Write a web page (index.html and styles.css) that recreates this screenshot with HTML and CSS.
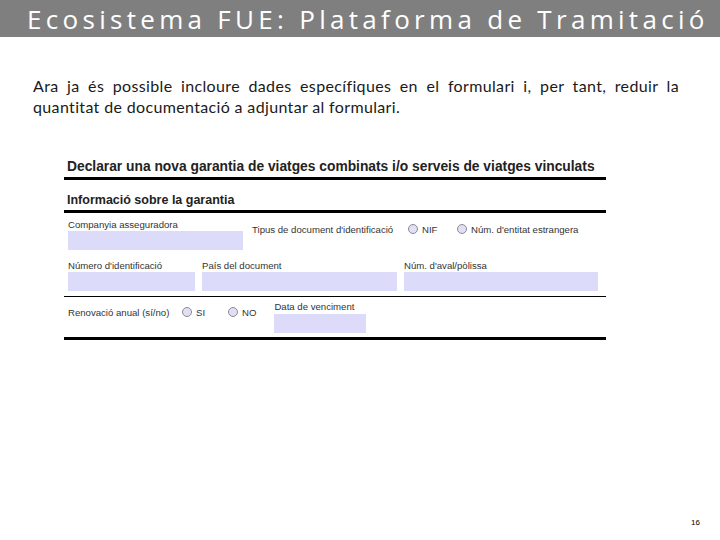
FILE: index.html
```html
<!DOCTYPE html>
<html>
<head>
<meta charset="utf-8">
<link rel="stylesheet" href="styles.css">
</head>
<body>
<header class="bar"><h1 class="title">Ecosistema FUE: Plataforma de Tramitació</h1></header>
<p class="intro">Ara ja és possible incloure dades específiques en el formulari i, per tant, reduir la quantitat de documentació a adjuntar al formulari.</p>
<section class="form">
  <h2 class="form-title">Declarar una nova garantia de viatges combinats i/o serveis de viatges vinculats</h2>
  <h3 class="sec-title">Informació sobre la garantia</h3>
  <div class="row row1">
    <div class="field f-comp">
      <span class="lbl">Companyia asseguradora</span>
      <span class="inp"></span>
    </div>
    <div class="choice c-tipus">
      <span class="lbl">Tipus de document d'identificació</span>
      <span class="opt opt-nif"><span class="radio"></span>NIF</span>
      <span class="opt"><span class="radio"></span>Núm. d'entitat estrangera</span>
    </div>
  </div>
  <div class="row row2">
    <div class="field f-num">
      <span class="lbl">Número d'identificació</span>
      <span class="inp"></span>
    </div>
    <div class="field f-pais">
      <span class="lbl">País del document</span>
      <span class="inp"></span>
    </div>
    <div class="field f-aval">
      <span class="lbl">Núm. d'aval/pòlissa</span>
      <span class="inp"></span>
    </div>
  </div>
  <div class="row row3">
    <div class="choice c-renov">
      <span class="lbl">Renovació anual (sí/no)</span>
      <span class="opt opt-si"><span class="radio"></span>SI</span>
      <span class="opt"><span class="radio"></span>NO</span>
    </div>
    <div class="field f-data">
      <span class="lbl">Data de venciment</span>
      <span class="inp"></span>
    </div>
  </div>
</section>
<footer class="pagenum">16</footer>
</body>
</html>
```
FILE: styles.css
```css
html, body {
  margin: 0;
  padding: 0;
  background: #ffffff;
  width: 720px;
  height: 540px;
  overflow: hidden;
  position: relative;
}
* { box-sizing: border-box; }
.bar {
  height: 37px;
  background: #7f7f7f;
  display: flex;
  align-items: center;
  padding-left: 27px;
}
.title {
  margin: 0;
  font-family: "Open Sans", sans-serif;
  font-weight: 400;
  font-size: 26px;
  letter-spacing: 4.3px;
  color: #ffffff;
  white-space: nowrap;
  line-height: 1;
}
.intro {
  margin: 38px 41px 0 33px;
  font-family: Lato, "Open Sans", sans-serif;
  font-size: 16px;
  letter-spacing: 0.35px;
  line-height: 21px;
  text-align: justify;
  color: #1a1a1a;
}
.form {
  margin: 42px 0 0 64px;
  width: 542px;
  font-family: "Liberation Sans", Arial, sans-serif;
  color: #222;
}
.form-title {
  margin: 0;
  padding: 0 0 3px 3px;
  font-size: 13.8px;
  font-weight: bold;
  line-height: 15px;
  border-bottom: 3px solid #000;
}
.sec-title {
  margin: 13px 0 0;
  padding: 0 0 3px 3px;
  font-size: 12.5px;
  font-weight: bold;
  line-height: 14px;
  border-bottom: 3px solid #000;
}
.row {
  display: flex;
  padding-left: 4px;
}
.row1 { height: 47px; padding-top: 6px; }
.row2 { height: 37px; padding-top: 0; border-bottom: 1px solid #000; }
.row3 { height: 43px; padding-top: 4px; border-bottom: 3px solid #000; }
.field {
  display: flex;
  flex-direction: column;
}
.lbl {
  font-size: 9.6px;
  line-height: 11px;
  white-space: nowrap;
  color: #333;
}
.inp {
  display: block;
  height: 19px;
  background: #dcdcfa;
  margin-top: 1px;
}
.f-comp { width: 175px; }
.c-tipus { margin-left: 9px; margin-top: 4px; }
.f-num { width: 127px; }
.f-pais { width: 195px; margin-left: 7px; }
.f-aval { width: 194px; margin-left: 7px; }
.choice {
  display: flex;
  align-items: center;
  height: 12px;
}
.opt {
  display: flex;
  align-items: center;
  font-size: 9.6px;
  line-height: 11px;
  white-space: nowrap;
  color: #333;
}
.radio {
  width: 10px;
  height: 10px;
  border-radius: 50%;
  border: 1px solid #8a8a9a;
  background: #e0e0f2;
  margin-right: 4px;
}
.c-tipus .lbl { width: 156px; }
.opt-nif { width: 49px; }
.c-renov { margin-top: 5px; }
.c-renov .lbl { width: 114px; }
.opt-si { width: 46px; }
.f-data { margin-left: 18px; width: 92px; }
.f-data .inp { margin-top: 2px; }
.pagenum {
  position: absolute;
  left: 691px;
  top: 518px;
  font-family: "Liberation Sans", Arial, sans-serif;
  font-size: 8px;
  color: #000;
}
```
